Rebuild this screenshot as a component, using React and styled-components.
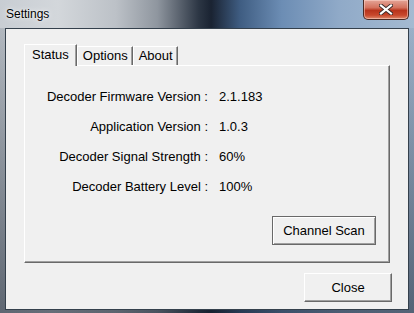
import React, { useState } from 'react'
import styled, { createGlobalStyle } from 'styled-components'

const GlobalStyle = createGlobalStyle`
  html, body {
    margin: 0;
    padding: 0;
    width: 414px;
    height: 313px;
    overflow: hidden;
    font-family: "Liberation Sans", Arial, sans-serif;
  }
`

const Window = styled.div`
  width: 414px;
  height: 313px;
  display: flex;
  flex-direction: column;
  box-sizing: border-box;
  padding: 0 5px 3px 5px;
  background:
    linear-gradient(180deg, rgba(255,255,255,0) 0%, rgba(20,30,45,0.55) 100%),
    linear-gradient(90deg, #b9bfc6 0%, #c9ced3 12%, #b4b9bf 28%, #8c939c 38%, #2e3846 48%, #1b2534 51%, #3d5b80 58%, #6a8bb3 68%, #8fa9c7 82%, #a2b8d0 100%);
`

const TitleBar = styled.div`
  height: 28px;
  flex: none;
  display: flex;
  align-items: flex-start;
  justify-content: space-between;
  background: linear-gradient(90deg, #c8cdd3 0%, #d3d7db 14%, #bcc1c7 28%, #8f969f 38%, #2c3644 48%, #1a2332 51%, #3f5d82 58%, #6c8db4 68%, #90aac8 82%, #a4bad1 100%);
  margin: 0 -5px;
  padding: 0 5px 0 6px;
`

const Title = styled.span`
  font-family: "Liberation Sans", Arial, sans-serif;
  font-size: 12px;
  line-height: 14px;
  margin-top: 7px;
  color: #000;
  text-shadow: 0 0 6px rgba(255,255,255,0.9), 0 0 2px rgba(255,255,255,0.9);
`

const CloseX = styled.button`
  width: 46px;
  height: 20px;
  margin-right: 0;
  padding: 0;
  border: 1px solid #4a2a24;
  border-top: none;
  border-radius: 0 0 5px 5px;
  background: linear-gradient(180deg, #e4a598 0%, #d4725e 40%, #b8341c 55%, #c8482c 80%, #de8a6c 100%);
  box-shadow: inset 0 0 0 1px rgba(255,220,210,0.5);
  display: flex;
  align-items: center;
  justify-content: center;
`

const Client = styled.div`
  flex: 1;
  display: flex;
  flex-direction: column;
  background: #f0f0f0;
  border: 1px solid #34404c;
  padding: 15px 16px 7px 18px;
`

const TabStrip = styled.div`
  display: flex;
  align-items: flex-end;
  height: 21px;
  position: relative;
  z-index: 1;
`

const Tab = styled.div`
  box-sizing: border-box;
  height: ${p => (p.$active ? '22px' : '19px')};
  margin-bottom: ${p => (p.$active ? '-1px' : '0')};
  padding: ${p => (p.$active ? '2px 7px 0 7px' : '1px 4px 0 5px')};
  background: #f0f0f0;
  border-top: 1px solid #fff;
  border-left: 1px solid #fff;
  border-right: 1px solid #696969;
  box-shadow: inset -1px 0 0 #a0a0a0;
  font-size: 13px;
  line-height: 16px;
  color: #000;
  cursor: default;
`

const Panel = styled.div`
  height: 198px;
  box-sizing: border-box;
  margin-right: 2px;
  border-top: 1px solid #fff;
  border-left: 1px solid #fff;
  border-right: 1px solid #696969;
  border-bottom: 1px solid #696969;
  box-shadow: inset -1px -1px 0 #a0a0a0;
  display: flex;
  flex-direction: column;
  padding: 23px 13px 17px 0;
`

const InfoGrid = styled.div`
  display: grid;
  grid-template-columns: 183px auto;
  column-gap: 11px;
  row-gap: 14px;
  font-size: 13px;
  line-height: 16px;
  color: #000;
`

const Label = styled.span`
  text-align: right;
  white-space: nowrap;
`

const Value = styled.span`
  white-space: nowrap;
`

const PanelFooter = styled.div`
  margin-top: auto;
  display: flex;
  justify-content: flex-end;
`

const Button = styled.button`
  box-sizing: border-box;
  width: ${p => p.$w}px;
  height: 29px;
  padding: 0;
  background: #f0f0f0;
  font-family: "Liberation Sans", Arial, sans-serif;
  font-size: 13px;
  color: #000;
  border: 1px solid ${p => (p.$default ? '#696969' : '#fff')};
  border-right-color: #696969;
  border-bottom-color: #696969;
  box-shadow: ${p =>
    p.$default
      ? 'inset 1px 1px 0 #fff, inset -1px -1px 0 #a0a0a0'
      : 'inset -1px -1px 0 #a0a0a0'};
`

const Footer = styled.div`
  margin-top: 10px;
  display: flex;
  justify-content: flex-end;
`

const rows = [
  ['Decoder Firmware Version :', '2.1.183'],
  ['Application Version :', '1.0.3'],
  ['Decoder Signal Strength :', '60%'],
  ['Decoder Battery Level :', '100%'],
]

export default function App() {
  const [tab, setTab] = useState('Status')
  return (
    <>
      <GlobalStyle />
      <Window>
        <TitleBar>
          <Title>Settings</Title>
          <CloseX aria-label="Close">
            <svg width="14" height="11" viewBox="0 0 14 11">
              <path d="M2 1.5 L12 9.5 M12 1.5 L2 9.5" stroke="#3a2a28" strokeWidth="4" strokeLinecap="square" />
              <path d="M2 1.5 L12 9.5 M12 1.5 L2 9.5" stroke="#fff" strokeWidth="2.2" strokeLinecap="square" />
            </svg>
          </CloseX>
        </TitleBar>
        <Client>
          <TabStrip>
            {['Status', 'Options', 'About'].map(t => (
              <Tab key={t} $active={t === tab} onClick={() => setTab(t)}>{t}</Tab>
            ))}
          </TabStrip>
          <Panel>
            <InfoGrid>
              {rows.map(([l, v]) => (
                <React.Fragment key={l}>
                  <Label>{l}</Label>
                  <Value>{v}</Value>
                </React.Fragment>
              ))}
            </InfoGrid>
            <PanelFooter>
              <Button $w={104} $default>Channel Scan</Button>
            </PanelFooter>
          </Panel>
          <Footer>
            <Button $w={88}>Close</Button>
          </Footer>
        </Client>
      </Window>
    </>
  )
}
